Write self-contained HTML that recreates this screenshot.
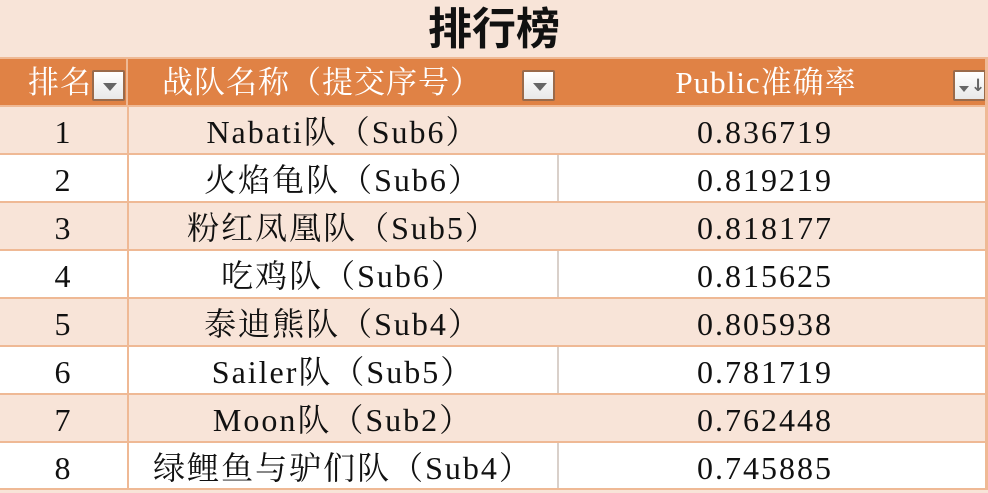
<!DOCTYPE html>
<html><head><meta charset="utf-8"><style>
*{margin:0;padding:0;box-sizing:border-box}
body{width:988px;height:490px;overflow:hidden;background:#f8e4d8;position:relative;font-family:"Liberation Serif","Noto Serif CJK SC",serif}
.title{position:absolute;left:0;top:0;width:988px;height:57px;text-align:center;font:bold 44px/60px "Liberation Sans","Noto Sans CJK SC",sans-serif;color:#111}
.hdr{position:absolute;left:0;top:57px;width:988px;height:48px;background:#e08245;border-top:2px solid #efb995}
.h{position:absolute;top:0;height:46px;color:#fff;font:31px/48px "Liberation Serif","Noto Serif CJK SC",serif;letter-spacing:1px;text-align:center}
.btn{position:absolute;top:11px;width:33px;height:31px;background:linear-gradient(#fff,#e8e8e8);border:2px solid #9a6a4a;border-radius:2px}
.tri{position:absolute;left:9px;top:11px;width:0;height:0;border-left:7px solid transparent;border-right:7px solid transparent;border-top:8px solid #666}
.row{position:absolute;left:0;width:988px;height:48px;border-top:2px solid #efb995;font-size:32px;line-height:50px;letter-spacing:2px;color:#111}
.row div{position:absolute;top:0;height:46px;text-align:center}
.c1{left:0;width:127px}
.c2{left:127px;width:430px;border-left:2px solid #efb995}
.c3{left:557px;width:428px;border-left:2px solid #d9d0ca;padding-right:14px}
.o{background:#f8e4d8}.e{background:#fff}
.o .c3{border-left-color:#f8e4d8}
.rb{position:absolute;left:985px;top:57px;width:3px;height:433px;background:#efb995}
.bot{position:absolute;left:0;top:488px;width:988px;height:2px;background:#efb995}
</style></head><body>
<div class="title">排行榜</div>
<div class="hdr">
 <div class="h" style="left:0;width:92px;text-align:right;padding-right:0">排名</div>
 <div class="btn" style="left:92px"><div class="tri"></div></div>
 <div style="position:absolute;left:126px;top:0;width:2px;height:46px;background:#efb995"></div>
 <div class="h" style="left:162px;width:360px;text-align:left">战队名称（提交序号）</div>
 <div class="btn" style="left:522px"><div class="tri"></div></div>
 <div class="h" style="left:557px;width:428px;padding-right:10px">Public准确率</div>
 <div class="btn" style="left:953px"><div class="tri" style="left:4px;top:14px;border-left-width:5px;border-right-width:5px;border-top-width:6px"></div><div style="position:absolute;left:16px;top:4px;color:#666;font:bold 17px/20px 'DejaVu Sans',sans-serif">↓</div></div>
</div>
<div class="row o" style="top:105px"><div class="c1">1</div><div class="c2">Nabati队（Sub6）</div><div class="c3">0.836719</div></div>
<div class="row e" style="top:153px"><div class="c1">2</div><div class="c2">火焰龟队（Sub6）</div><div class="c3">0.819219</div></div>
<div class="row o" style="top:201px"><div class="c1">3</div><div class="c2">粉红凤凰队（Sub5）</div><div class="c3">0.818177</div></div>
<div class="row e" style="top:249px"><div class="c1">4</div><div class="c2">吃鸡队（Sub6）</div><div class="c3">0.815625</div></div>
<div class="row o" style="top:297px"><div class="c1">5</div><div class="c2">泰迪熊队（Sub4）</div><div class="c3">0.805938</div></div>
<div class="row e" style="top:345px"><div class="c1">6</div><div class="c2">Sailer队（Sub5）</div><div class="c3">0.781719</div></div>
<div class="row o" style="top:393px"><div class="c1">7</div><div class="c2">Moon队（Sub2）</div><div class="c3">0.762448</div></div>
<div class="row e" style="top:441px"><div class="c1">8</div><div class="c2">绿鲤鱼与驴们队（Sub4）</div><div class="c3">0.745885</div></div>
<div class="rb"></div><div class="bot"></div>
</body></html>
